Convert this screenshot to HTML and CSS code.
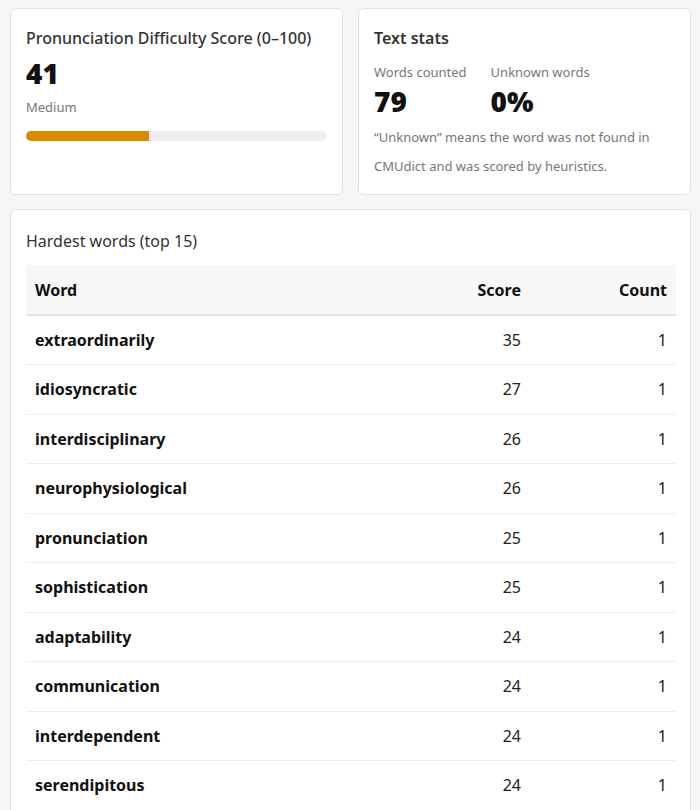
FILE: index.html
```html
<!DOCTYPE html>
<html lang="en">
<head>
<meta charset="utf-8">
<title>Pronunciation Difficulty</title>
<link rel="stylesheet" href="styles.css">
</head>
<body>
<main class="page">
  <div class="top-grid">
    <section class="card">
      <h2 class="card-title title-medium">Pronunciation Difficulty Score (0–100)</h2>
      <div class="big-num">41</div>
      <div class="muted level">Medium</div>
      <div class="bar"><div class="bar-fill" style="width:41%"></div></div>
    </section>
    <section class="card">
      <h2 class="card-title title-semibold">Text stats</h2>
      <div class="stats">
        <div class="stat">
          <div class="muted">Words counted</div>
          <div class="big-num">79</div>
        </div>
        <div class="stat">
          <div class="muted">Unknown words</div>
          <div class="big-num">0%</div>
        </div>
      </div>
      <p class="note">“Unknown” means the word was not found in CMUdict and was scored by heuristics.</p>
    </section>
  </div>
  <section class="card card-table">
    <h2 class="card-title title-regular">Hardest words (top 15)</h2>
    <table class="words">
      <thead>
        <tr><th class="col-word">Word</th><th class="num col-score">Score</th><th class="num col-count">Count</th></tr>
      </thead>
      <tbody>
        <tr><td class="word">extraordinarily</td><td class="num">35</td><td class="num">1</td></tr>
        <tr><td class="word">idiosyncratic</td><td class="num">27</td><td class="num">1</td></tr>
        <tr><td class="word">interdisciplinary</td><td class="num">26</td><td class="num">1</td></tr>
        <tr><td class="word">neurophysiological</td><td class="num">26</td><td class="num">1</td></tr>
        <tr><td class="word">pronunciation</td><td class="num">25</td><td class="num">1</td></tr>
        <tr><td class="word">sophistication</td><td class="num">25</td><td class="num">1</td></tr>
        <tr><td class="word">adaptability</td><td class="num">24</td><td class="num">1</td></tr>
        <tr><td class="word">communication</td><td class="num">24</td><td class="num">1</td></tr>
        <tr><td class="word">interdependent</td><td class="num">24</td><td class="num">1</td></tr>
        <tr><td class="word">serendipitous</td><td class="num">24</td><td class="num">1</td></tr>
        <tr><td class="word">characteristically</td><td class="num">23</td><td class="num">1</td></tr>
        <tr><td class="word">entrepreneurial</td><td class="num">23</td><td class="num">1</td></tr>
        <tr><td class="word">phenomenon</td><td class="num">22</td><td class="num">1</td></tr>
        <tr><td class="word">particularly</td><td class="num">21</td><td class="num">1</td></tr>
        <tr><td class="word">vocabulary</td><td class="num">20</td><td class="num">1</td></tr>
      </tbody>
    </table>
  </section>
</main>
</body>
</html>
```
FILE: styles.css
```css
* { box-sizing: border-box; }
html, body { margin: 0; padding: 0; }
body {
  background: #f6f6f7;
  font-family: "Noto Sans", "Open Sans", Arial, sans-serif;
  color: #111;
}
.page {
  padding: 8px 9px 20px 10px;
  display: flex;
  flex-direction: column;
  gap: 14px;
}
.top-grid {
  display: grid;
  grid-template-columns: 1fr 1fr;
  gap: 15px;
}
.card {
  background: #fff;
  border: 1px solid #e2e2e5;
  border-radius: 6px;
  padding: 17px 15px 13px 15px;
}
.card-title {
  margin: 0;
  font-size: 16px;
  line-height: 24px;
  color: #333;
}
.title-medium { font-weight: 500; }
.title-semibold { font-weight: 600; }
.title-regular { font-weight: 400; }
.big-num {
  font-size: 28px;
  font-weight: 900;
  line-height: 34px;
  color: #111;
}
.card > .big-num { margin-top: 6px; }
.muted {
  font-size: 13px;
  line-height: 20px;
  color: #777;
}
.level { margin-top: 7px; }
.bar {
  margin-top: 14px;
  height: 10px;
  border-radius: 5px;
  background: #efeff1;
  overflow: hidden;
}
.bar-fill {
  height: 100%;
  background: #d98a00;
}
.stats {
  display: flex;
  gap: 24px;
  margin-top: 12px;
}
.stat .big-num { margin-top: 2px; }
.note {
  margin: 5px 0 0 0;
  font-size: 13px;
  line-height: 29px;
  color: #777;
}
.card-table { padding: 19px 14px 20px 15px; }
.words {
  width: 100%;
  border-collapse: collapse;
  margin-top: 12px;
  font-size: 16px;
}
.words th {
  background: #f7f7f8;
  font-weight: 700;
  text-align: left;
  padding: 12px 9px;
  height: 50px;
  border-bottom: 2px solid #e4e4e6;
  color: #111;
}
.words td {
  padding: 12px 9px;
  height: 49.5px;
  border-bottom: 1px solid #ececee;
  color: #222;
}
.words td.word { font-weight: 700; color: #111; }
.words .num { text-align: right; }
.words .col-score { width: 130px; }
.words .col-count { width: 146px; }
```
